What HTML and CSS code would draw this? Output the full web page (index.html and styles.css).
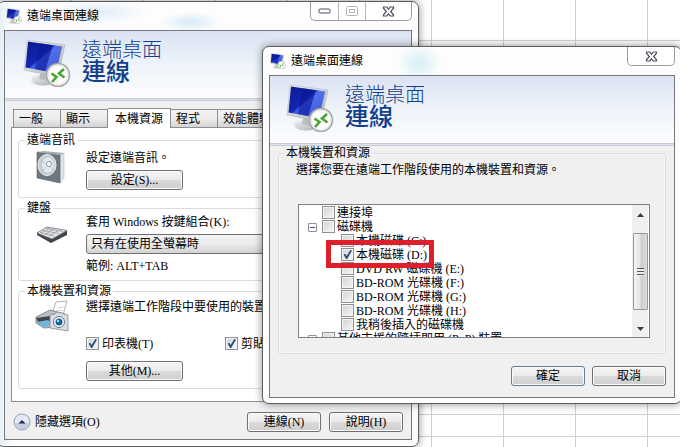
FILE: index.html
```html
<!DOCTYPE html>
<html lang="zh-Hant">
<head>
    <meta charset="UTF-8">
    <meta name="viewport" content="width=device-width, initial-scale=1.0">
    <title>遠端桌面連線</title>
    <link rel="stylesheet" href="styles.css">
</head>
<body>
    <svg class="defs" aria-hidden="true">
        <defs>
            <linearGradient id="screen" x1="0" y1="0" x2="1" y2="1">
                <stop offset="0" stop-color="#0a1a8c"/>
                <stop offset="0.45" stop-color="#1426b4"/>
                <stop offset="0.5" stop-color="#3f5fe6"/>
                <stop offset="1" stop-color="#2335c8"/>
            </linearGradient>
            <linearGradient id="metal" x1="0" y1="0" x2="1" y2="1">
                <stop offset="0" stop-color="#f6f6f6"/>
                <stop offset="1" stop-color="#a9acb0"/>
            </linearGradient>
            <symbol id="rdp" viewBox="0 0 48 48">
                <ellipse cx="20" cy="41" rx="12" ry="5.500" fill="url(#metal)"/>
                <path d="M18 31l10 2-2 9-10-2z" fill="#b9bbbe"/>
                <path d="M4 1L42 6 35 38 1 31z" fill="url(#metal)" stroke="#b5b8bc" stroke-width=".6"/>
                <path d="M5 2.500L39 7.500 33 34 2.500 28.500z" fill="url(#screen)"/>
                <path d="M17 4.200L30 6.200 22 32 12 30z" fill="#0a1690" opacity=".55"/>
                <path d="M30 6.200L39 7.500 33 34 22 32z" fill="#7f9cf5" opacity=".3"/>
                <circle cx="35" cy="36" r="11.500" fill="#f3f3f3" stroke="#a4a6a8" stroke-width="1.500"/>
                <circle cx="35" cy="36" r="9.500" fill="#fff" stroke="#dcdcdc" stroke-width=".6"/>
                <path d="M28.500 34.500l5 3.500-4.500 5M41 30l-5 4.500 5.500 4" fill="none" stroke="#4aa336" stroke-width="2.600"/>
            </symbol>
            <symbol id="close" viewBox="0 0 13 11">
                <path d="M1.500 1h3.300L6.500 3.200 8.200 1h3.300v1.200L8.700 5.500l2.800 3.300V10H8.200L6.500 7.800 4.800 10H1.500V8.800l2.800-3.300-2.800-3.300z" fill="#fff" stroke="#4c505c" stroke-width="1.200"/>
            </symbol>
        </defs>
    </svg>

    <main class="desktop">
        <section class="window window-main">
            <div class="titlebar">
                <svg class="title-icon"><use href="#rdp"/></svg>
                <span class="title">遠端桌面連線</span>
                <div class="caption">
                    <button class="cap" aria-label="最小化"><svg width="13" height="6" viewBox="0 0 13 6"><rect x="1" y="1" width="11" height="4" rx="1" fill="#fff" stroke="#4c505c"/></svg></button>
                    <button class="cap" aria-label="最大化" disabled><svg width="12" height="10" viewBox="0 0 12 10"><rect x=".5" y=".5" width="11" height="9" rx="1" fill="#fff" stroke="#b4b6ba"/><rect x="3.500" y="3.500" width="5" height="3" fill="#fff" stroke="#b4b6ba"/></svg></button>
                    <button class="cap cap-close" aria-label="關閉"><svg width="13" height="11"><use href="#close"/></svg></button>
                </div>
            </div>
            <div class="client">
                <header class="banner">
                    <svg class="banner-icon"><use href="#rdp"/></svg>
                    <h1><span>遠端桌面</span><strong>連線</strong></h1>
                </header>
                <div class="panel">
                    <div class="tabs" role="tablist">
                        <button class="tab" role="tab">一般</button>
                        <button class="tab" role="tab">顯示</button>
                        <button class="tab active" role="tab" aria-selected="true">本機資源</button>
                        <button class="tab" role="tab">程式</button>
                        <button class="tab" role="tab">效能體驗</button>
                    </div>
                    <div class="page">
                        <fieldset class="group audio">
                            <legend>遠端音訊</legend>
                            <svg class="group-icon" viewBox="0 0 46 34">
                                <path d="M32 4l4-2v25l-4 5z" fill="#dfe3e6" stroke="#b8bdc1" stroke-width=".6"/>
                                <path d="M9 1l23 3v28L9 27z" fill="#6d7780" stroke="#59636b" stroke-width=".6"/>
                                <path d="M9 1l7-1 20 2-4 2z" fill="#a3abb1"/>
                                <ellipse cx="19" cy="14" rx="9" ry="10.500" fill="#c5ccd2" stroke="#eef1f3"/>
                                <ellipse cx="20" cy="14" rx="6" ry="7.500" fill="#e4e9ed"/>
                                <path d="M14 10l11 8M15 20l9-12" stroke="#b5bdc4" stroke-width=".6"/>
                                <circle cx="21" cy="13" r="2.500" fill="#fff" stroke="#8e98a0"/>
                            </svg>
                            <div class="stack">
                                <p>設定遠端音訊。</p>
                                <button class="btn wide">設定(S)...</button>
                            </div>
                        </fieldset>
                        <fieldset class="group keyboard">
                            <legend>鍵盤</legend>
                            <svg class="group-icon" viewBox="0 0 46 34">
                                <path d="M9 20l14 8 16-8v-4L9 17z" fill="#41454a"/>
                                <path d="M9 18L19 12l20 3.500L24 24z" fill="#e4e6e8" stroke="#70757a" stroke-width=".8"/>
                                <path d="M13 18l9-5M17 19.500l9-5.500M21 21l10-6M18 13.500l17 3M15 15.500l16 3M12 17.500l14 3.500" stroke="#989da2" stroke-width=".8" fill="none"/>
                            </svg>
                            <div class="stack">
                                <label for="keys">套用 Windows 按鍵組合(K):</label>
                                <select id="keys" class="combo"><option>只有在使用全螢幕時</option></select>
                                <p>範例: ALT+TAB</p>
                            </div>
                        </fieldset>
                        <fieldset class="group devices">
                            <legend>本機裝置和資源</legend>
                            <svg class="group-icon" viewBox="0 0 46 34">
                                <path d="M24 14l4-12 11-1-4 14z" fill="#fff" stroke="#9b9fa4" stroke-width=".8"/>
                                <path d="M29 8l7-1M28 11l7-1" stroke="#c5c9cd" stroke-width=".8"/>
                                <path d="M8 17l14-7 15 4-8 13-13 1-8-5z" fill="#b8bec4" stroke="#6f767d" stroke-width=".8"/>
                                <path d="M8 18l14-2 4 4-14 5z" fill="#3f474e"/>
                                <path d="M9 22l11-2 5 4-10 4z" fill="#74b4df"/>
                                <path d="M22 15l5-1 2-2 5 1 2 1 4 1v16l-18-3z" fill="#d9dde1" stroke="#858c93" stroke-width=".8"/>
                                <circle cx="31" cy="22" r="5.500" fill="#fff" stroke="#647586"/>
                                <circle cx="31" cy="22" r="3.500" fill="#1b5c99"/>
                                <circle cx="30" cy="21" r="1.200" fill="#a9dcff"/>
                            </svg>
                            <div class="stack">
                                <p>選擇遠端工作階段中要使用的裝置</p>
                                <div class="checks">
                                    <label><input type="checkbox" checked>印表機(T)</label>
                                    <label><input type="checkbox" checked>剪貼簿(L)</label>
                                </div>
                                <button class="btn wide">其他(M)...</button>
                            </div>
                        </fieldset>
                    </div>
                </div>
                <footer class="footer">
                    <button class="collapse">
                        <svg width="18" height="18" viewBox="0 0 18 18"><circle cx="9" cy="9" r="8" fill="#e3eaf4" stroke="#8d9db3"/><path d="M2 10a7 6 0 0 0 14 0z" fill="#c3cfe1"/><path d="M5.500 10.500L9 7l3.500 3.500z" fill="#1d2b52"/></svg>
                        隱藏選項(O)
                    </button>
                    <button class="btn">連線(N)</button>
                    <button class="btn">說明(H)</button>
                </footer>
            </div>
        </section>

        <section class="window window-devices">
            <div class="titlebar">
                <svg class="title-icon"><use href="#rdp"/></svg>
                <span class="title">遠端桌面連線</span>
                <div class="caption">
                    <button class="cap cap-close" aria-label="關閉"><svg width="13" height="11"><use href="#close"/></svg></button>
                </div>
            </div>
            <div class="client">
                <header class="banner">
                    <svg class="banner-icon"><use href="#rdp"/></svg>
                    <h1><span>遠端桌面</span><strong>連線</strong></h1>
                </header>
                <div class="dialog">
                    <fieldset class="group">
                        <legend>本機裝置和資源</legend>
                        <p class="hint">選擇您要在遠端工作階段使用的本機裝置和資源。</p>
                        <div class="listbox">
                            <ul class="tree">
                                <li><label><input type="checkbox">連接埠</label></li>
                                <li><button class="expander" aria-label="收合"></button><label><input type="checkbox">磁碟機</label></li>
                                <li class="child"><label><input type="checkbox">本機磁碟 (C:)</label></li>
                                <li class="child marked"><label><input type="checkbox" checked>本機磁碟 (D:)</label></li>
                                <li class="child"><label><input type="checkbox">DVD RW 磁碟機 (E:)</label></li>
                                <li class="child"><label><input type="checkbox">BD-ROM 光碟機 (F:)</label></li>
                                <li class="child"><label><input type="checkbox">BD-ROM 光碟機 (G:)</label></li>
                                <li class="child"><label><input type="checkbox">BD-ROM 光碟機 (H:)</label></li>
                                <li class="child"><label><input type="checkbox">我稍後插入的磁碟機</label></li>
                                <li><button class="expander" aria-label="收合"></button><label><input type="checkbox">其他支援的隨插即用 (PnP) 裝置</label></li>
                            </ul>
                            <div class="scrollbar">
                                <svg width="7" height="4" viewBox="0 0 7 4"><path d="M0 4l3.500-4L7 4z" fill="#3c3c3c"/></svg>
                                <div class="thumb"></div>
                                <svg width="7" height="4" viewBox="0 0 7 4"><path d="M0 0h7L3.500 4z" fill="#3c3c3c"/></svg>
                            </div>
                        </div>
                    </fieldset>
                    <div class="actions">
                        <button class="btn default">確定</button>
                        <button class="btn">取消</button>
                    </div>
                </div>
            </div>
        </section>
    </main>
</body>
</html>
```
FILE: styles.css
```css
* {
    box-sizing: border-box;
}
body {
    margin: 0;
    font: 12px/14px "Liberation Serif", "Noto Sans CJK TC", serif;
    color: #000;
}
button, select, input {
    font: inherit;
    color: inherit;
    margin: 0;
    padding: 0;
}
p, h1, ul {
    margin: 0;
    padding: 0;
}
svg {
    display: block;
}
.defs {
    position: absolute;
    width: 0;
    height: 0;
}

/* spreadsheet behind the windows */
.desktop {
    position: relative;
    min-height: 100vh;
    overflow: hidden;
    background:
        linear-gradient(#cfcfcf, #cfcfcf) 0 40px / 100% 1px no-repeat,
        linear-gradient(#cfcfcf, #cfcfcf) 0 414px / 100% 1px no-repeat,
        linear-gradient(#cfcfcf, #cfcfcf) 0 436px / 100% 1px no-repeat,
        linear-gradient(90deg, #cfcfcf 1px, transparent 1px) 71px 0 / 72px 100%,
        #fff;
}

.window {
    position: absolute;
    padding: 0 6px 6px;
    border: 1px solid #5b5d60;
    border-radius: 7px;
    background:
        radial-gradient(ellipse 50px 12px at 100px 10px, #e0edf8, transparent),
        radial-gradient(ellipse 30px 10px at 192px 20px, #d6e9f6, transparent),
        linear-gradient(90deg, #e4eef6, #fdfdfd 15px);
    box-shadow: 0 0 9px rgba(0, 0, 0, 0.45), inset 0 0 0 1px #fff;
}
.window-main {
    top: 1px;
    left: -3px;
    right: 261px;
}
.window-devices {
    top: 46px;
    left: 262px;
    right: -2px;
    padding-bottom: 5px;
    background:
        radial-gradient(ellipse 22px 20px at 156px 16px, #d5eef5, transparent),
        #fdfdfd;
}

.titlebar {
    display: flex;
    align-items: center;
    height: 28px;
    gap: 5px;
    padding-left: 2px;
}
.window-devices .titlebar {
    padding-left: 1px;
}
.title-icon {
    width: 16px;
    height: 16px;
}
.title {
    flex: 1;
}
.caption {
    display: flex;
    align-self: flex-start;
    height: 19px;
    border: 1px solid #9b9da3;
    border-top: 0;
    border-radius: 0 0 5px 5px;
    background: rgba(255, 255, 255, 0.7);
}
.cap {
    display: grid;
    place-items: center;
    width: 27px;
    border: 0;
    background: none;
}
.cap + .cap {
    border-left: 1px solid #b5b7bb;
}
.cap-close,
.cap + .cap-close {
    width: 46px;
}

.client {
    border: 1px solid #74777d;
    background: #f0f0f0;
}
.banner {
    display: flex;
    align-items: flex-start;
    gap: 11px;
    height: 70px;
    padding: 8px 18px;
    background: linear-gradient(#dbe3f3, #eef3fa 50%, #fcfdfe);
    border-bottom: 3px double #cbcdd0;
}
.window-devices .banner {
    padding: 8px 16px;
}
.banner-icon {
    width: 48px;
    height: 48px;
}
h1 {
    display: flex;
    flex-direction: column;
    font-size: 20px;
    line-height: 22px;
    font-weight: 300;
    color: #123f8c;
}
h1 strong {
    font-size: 24px;
    font-weight: 500;
}

.panel {
    padding: 6px 6px 0;
}
.tabs {
    display: flex;
    align-items: flex-end;
    height: 20px;
    padding-left: 2px;
}
.tab {
    height: 18px;
    padding: 0 17px 0 5px;
    border: 1px solid #8c8e94;
    border-width: 1px 1px 0 0;
    background: linear-gradient(#f3f3f3, #ececec 50%, #d5d5d5);
    white-space: nowrap;
}
.tab:first-child {
    border-left-width: 1px;
}
.tab.active {
    height: 20px;
    padding: 0 7px;
    background: #fff;
    margin-bottom: -1px;
    position: relative;
}
.page {
    padding: 5px 6px 12px;
    border: 1px solid #8c8e94;
    background: #fff;
}

.group {
    min-width: 0;
    margin: 0;
    padding: 0 8px 7px 9px;
    border: 1px solid #dcdcdc;
    border-radius: 3px;
}
.group + .group {
    margin-top: 3px;
}
legend {
    padding: 0 2px;
    margin-left: -3px;
}
.page .group {
    display: grid;
    grid-template-columns: 46px 1fr;
    gap: 12px;
}
.group-icon {
    width: 46px;
    height: 34px;
}
.stack {
    display: grid;
    gap: 5px;
    justify-items: start;
    white-space: nowrap;
}
.audio {
    padding-top: 4px;
}
.devices {
    padding-top: 2px;
}
.devices .stack {
    gap: 10px;
}
.combo {
    appearance: none;
    width: 100%;
    height: 20px;
    padding: 0 4px;
    border: 1px solid #707070;
    border-radius: 3px;
    background: linear-gradient(#f3f3f3, #ebebeb 50%, #d2d2d2);
}
.checks {
    display: grid;
    grid-template-columns: 139px auto;
    padding-top: 13px;
}
.checks label {
    display: flex;
    gap: 3px;
}

.btn {
    width: 74px;
    height: 20px;
    border: 1px solid #707070;
    border-radius: 3px;
    background: linear-gradient(#f4f4f4, #ebebeb 50%, #dadada 51%, #cfcfcf);
    box-shadow: inset 0 0 0 1px #fbfbfb;
}
.btn.wide {
    width: 97px;
}
.btn.default {
    border-color: #5d7f99;
}

input[type="checkbox"] {
    appearance: none;
    display: grid;
    place-items: center;
    flex: none;
    width: 13px;
    height: 13px;
    border: 1px solid #8e8f8f;
    background: linear-gradient(135deg, #cfd3d8, #f7f7f7);
    box-shadow: inset 0 0 0 1px #f4f4f4;
}
input[type="checkbox"]:checked::before {
    content: "";
    width: 9px;
    height: 9px;
    background: #2c4a80;
    clip-path: polygon(8% 50%, 26% 42%, 40% 66%, 82% 0, 100% 6%, 46% 100%, 34% 100%);
}

.footer {
    display: flex;
    align-items: center;
    gap: 8px;
    padding: 10px 8px 7px;
}
.collapse {
    display: flex;
    align-items: center;
    gap: 4px;
    margin-right: auto;
    border: 0;
    background: none;
}

.dialog {
    padding: 0 8px 11px;
}
.dialog .group {
    padding: 3px 15px 15px 17px;
    box-shadow: inset 0 0 0 1px #f8f8f8;
}
.dialog legend {
    margin-left: -12px;
}
.hint {
    white-space: nowrap;
}
.listbox {
    display: flex;
    margin: 27px 0 0 2px;
    height: 134px;
    border: 1px solid #7c7f85;
    background: #fff;
    overflow: hidden;
}
.tree {
    flex: 1;
    padding: 1px 0 0 9px;
    list-style: none;
}
.tree li {
    display: grid;
    grid-template-columns: 14px 1fr;
    align-items: center;
    height: 14px;
}
.tree label {
    grid-column: 2;
    display: flex;
    gap: 2px;
    white-space: nowrap;
}
.tree .child {
    padding-left: 19px;
}
.expander {
    width: 9px;
    height: 9px;
    border: 1px solid #919191;
    border-radius: 1px;
    background: linear-gradient(#33508c, #33508c) center / 5px 1px no-repeat, #fff;
}
/* red frame round the drive to tick */
.marked {
    position: relative;
}
.marked::after {
    content: "";
    box-sizing: border-box;
    position: absolute;
    top: -8px;
    left: 18px;
    width: 108px;
    height: 28px;
    border: 5px solid #dc1f2b;
    pointer-events: none;
}
.scrollbar {
    display: flex;
    flex-direction: column;
    align-items: center;
    width: 16px;
    margin-right: 1px;
    padding: 8px 0 6px;
    background: #f0f0f0;
}
.thumb {
    display: grid;
    place-items: center;
    width: 15px;
    height: 77px;
    margin: 16px 0 auto;
    border: 1px solid #979797;
    border-radius: 1px;
    background: linear-gradient(90deg, #f4f4f4, #e6e6e6 45%, #cdcdcd 55%, #dcdcdc);
}
.thumb::before {
    content: "";
    width: 7px;
    height: 8px;
    background: repeating-linear-gradient(#555 0 1px, #eee 1px 3px);
}
.actions {
    display: flex;
    justify-content: flex-end;
    gap: 7px;
    padding-top: 12px;
}
```
